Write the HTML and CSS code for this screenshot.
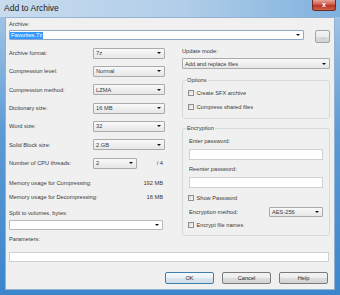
FILE: index.html
```html
<!DOCTYPE html>
<html lang="en">
<head>
    <meta charset="UTF-8">
    <meta name="viewport" content="width=device-width, initial-scale=1.0">
    <title>Add to Archive</title>
    <link rel="stylesheet" href="styles.css">
</head>
<body>
    <div class="window">
        <div class="titlebar">
            <span class="title">Add to Archive</span>
            <span class="close">x</span>
        </div>
        <div class="client">
            <div class="label first">Archive:</div>
            <div class="archive-row">
                <div class="combo edit wide"><span class="sel">Favorites.7z</span><i class="arrow"></i></div>
                <button class="btn browse">...</button>
            </div>

            <div class="columns">
                <div class="col-left">
                    <div class="row"><span class="name">Archive format:</span><div class="combo"><span>7z</span><i class="arrow"></i></div></div>
                    <div class="row"><span class="name">Compression level:</span><div class="combo"><span>Normal</span><i class="arrow"></i></div></div>
                    <div class="row"><span class="name">Compression method:</span><div class="combo"><span>LZMA</span><i class="arrow"></i></div></div>
                    <div class="row"><span class="name">Dictionary size:</span><div class="combo"><span>16 MB</span><i class="arrow"></i></div></div>
                    <div class="row"><span class="name">Word size:</span><div class="combo"><span>32</span><i class="arrow"></i></div></div>
                    <div class="row"><span class="name">Solid Block size:</span><div class="combo"><span>2 GB</span><i class="arrow"></i></div></div>
                    <div class="row"><span class="name">Number of CPU threads:</span><div class="combo short"><span>2</span><i class="arrow"></i></div><span class="threads">/ 4</span></div>
                    <div class="mem first-mem"><span>Memory usage for Compressing:</span><span>192 MB</span></div>
                    <div class="mem"><span>Memory usage for Decompressing:</span><span>18 MB</span></div>
                    <div class="label split">Split to volumes, bytes:</div>
                    <div class="combo edit split-combo"><span></span><i class="arrow"></i></div>
                </div>

                <div class="col-right">
                    <div class="label update">Update mode:</div>
                    <div class="combo update-combo"><span>Add and replace files</span><i class="arrow"></i></div>
                    <fieldset class="group options">
                        <legend>Options</legend>
                        <label class="check first-check"><i class="box"></i>Create SFX archive</label>
                        <label class="check"><i class="box"></i>Compress shared files</label>
                    </fieldset>
                    <fieldset class="group encryption">
                        <legend>Encryption</legend>
                        <div class="label pw">Enter password:</div>
                        <div class="field pw-field"></div>
                        <div class="label pw">Reenter password:</div>
                        <div class="field pw-field"></div>
                        <label class="check show-pw"><i class="box"></i>Show Password</label>
                        <div class="method"><span>Encryption method:</span><div class="combo"><span>AES-256</span><i class="arrow"></i></div></div>
                        <label class="check"><i class="box"></i>Encrypt file names</label>
                    </fieldset>
                </div>
            </div>

            <div class="label">Parameters:</div>
            <div class="field params"></div>

            <div class="buttons">
                <button class="btn default">OK</button>
                <button class="btn">Cancel</button>
                <button class="btn">Help</button>
            </div>
        </div>
    </div>
</body>
</html>
```

FILE: styles.css
```css
* {
    box-sizing: border-box;
}
html, body {
    margin: 0;
}
body {
    width: 340px;
    height: 295px;
    font-family: "Liberation Sans", Arial, sans-serif;
    font-size: 5.7px;
    color: #3a3a3a;
}

/* window frame */
.window {
    width: 340px;
    height: 295px;
    display: flex;
    flex-direction: column;
    background: linear-gradient(#a9c9e8, #5c9ad4 45%, #3c86cc);
}
.titlebar {
    height: 17px;
    display: flex;
    align-items: flex-start;
    padding: 0 4px;
    background: linear-gradient(to right, #c9dcee, #b0cde9 55%, #7fb1de);
}
.title {
    font-size: 8.5px;
    line-height: 16px;
    color: #1b1b1b;
}
.close {
    margin-left: auto;
    width: 24px;
    height: 11px;
    border: 1px solid #6d2a22;
    border-top: none;
    border-radius: 0 0 3px 3px;
    background: linear-gradient(#e4a497, #cf5443 50%, #b8311f 51%, #d0624a);
    color: #fff;
    font-weight: bold;
    font-size: 7px;
    line-height: 9px;
    text-align: center;
}
.client {
    flex: 1;
    margin: 0 5px 5px;
    background: #f0f0f0;
    border: 1px solid #93b2d2;
    padding: 0 4px 0 3px;
}

.label {
    line-height: 7px;
    white-space: nowrap;
}
.label.first {
    margin-top: 3px;
}

/* combo boxes */
.combo {
    display: flex;
    align-items: center;
    width: 72px;
    height: 11px;
    border: 1px solid #ababab;
    border-radius: 1px;
    background: linear-gradient(#f9f9f9, #e6e6e6);
    padding-left: 2px;
    white-space: nowrap;
}
.combo.edit {
    background: #fff;
    border-color: #b3b9c0;
    padding-left: 0;
}
.arrow {
    margin-left: auto;
    margin-right: 3px;
    width: 0;
    height: 0;
    border-left: 2px solid transparent;
    border-right: 2px solid transparent;
    border-top: 2px solid #111;
}
.sel {
    background: #3399ff;
    color: #fff;
    line-height: 7px;
    padding: 0 1px;
}

.archive-row {
    display: flex;
    gap: 11px;
    margin-top: 2px;
    height: 13px;
}
.combo.wide {
    width: 295px;
    height: 10px;
    border-color: #8ea9c6;
}

/* buttons */
.btn {
    font-family: inherit;
    font-size: inherit;
    color: #2a2a2a;
    padding: 0;
    width: 49px;
    height: 12px;
    border: 1px solid #7a7a7a;
    border-radius: 2px;
    background: linear-gradient(#f3f3f3, #ececec 50%, #dedede 51%, #d2d2d2);
}
.btn.browse {
    width: 15px;
    height: 13px;
    color: #888;
    border-color: #a3a3a3;
}
.btn.default {
    border-color: #3c7fb1;
    background: linear-gradient(#f5fafd, #e9f1f7 50%, #dce7ef 51%, #cfdde8);
}

.columns {
    display: grid;
    grid-template-columns: 156px 148px;
    column-gap: 17px;
}

/* left column */
.col-left {
    padding-top: 1px;
}
.row {
    display: flex;
    align-items: center;
    height: 18.33px;
    white-space: nowrap;
}
.row .name {
    flex: 0 0 84px;
}
.combo.short {
    width: 44px;
}
.threads {
    margin-left: auto;
    padding-right: 2px;
}
.mem {
    display: flex;
    justify-content: space-between;
    align-items: center;
    height: 14.5px;
    padding-right: 2px;
    white-space: nowrap;
}
.mem.first-mem {
    margin-top: 3px;
}
.label.split {
    margin-top: 5.5px;
}
.combo.split-combo {
    width: 154px;
    height: 10px;
    margin-top: 3px;
}

/* right column */
.label.update {
    margin-top: 4.5px;
}
.combo.update-combo {
    width: 148px;
    margin-top: 3.5px;
}
.group {
    margin: 0;
    min-width: 0;
    border: 1px solid #d6dbe0;
    border-radius: 3px;
    padding: 0 6px 4px;
}
.group legend {
    line-height: 7px;
    padding: 0 1px;
    margin-left: -3px;
}
.group.options {
    margin-top: 7.5px;
}
.group.encryption {
    margin-top: 5.5px;
    padding-bottom: 2.5px;
}
.check {
    display: flex;
    align-items: center;
    height: 14px;
    white-space: nowrap;
}
.check.first-check {
    margin-top: 2.5px;
}
.box {
    width: 6px;
    height: 6px;
    margin-left: -1px;
    margin-right: 2.5px;
    border: 1px solid #8e8f8f;
    background: linear-gradient(135deg, #d8d8d8, #fbfbfb);
}
.label.pw {
    margin-top: 6px;
}
.field {
    background: #fff;
    border: 1px solid #cdd2d8;
    height: 11px;
}
.pw-field {
    margin-top: 4px;
}
.check.show-pw {
    margin-top: 3.5px;
}
.method {
    display: flex;
    align-items: center;
    height: 13px;
    white-space: nowrap;
}
.method .combo {
    margin-left: auto;
    width: 54px;
    height: 10px;
}

/* bottom */
.field.params {
    margin-top: 9px;
    height: 10px;
    margin-right: 1px;
}
.buttons {
    display: flex;
    justify-content: flex-end;
    gap: 8px;
    margin-top: 10px;
    padding-right: 2px;
}
```
